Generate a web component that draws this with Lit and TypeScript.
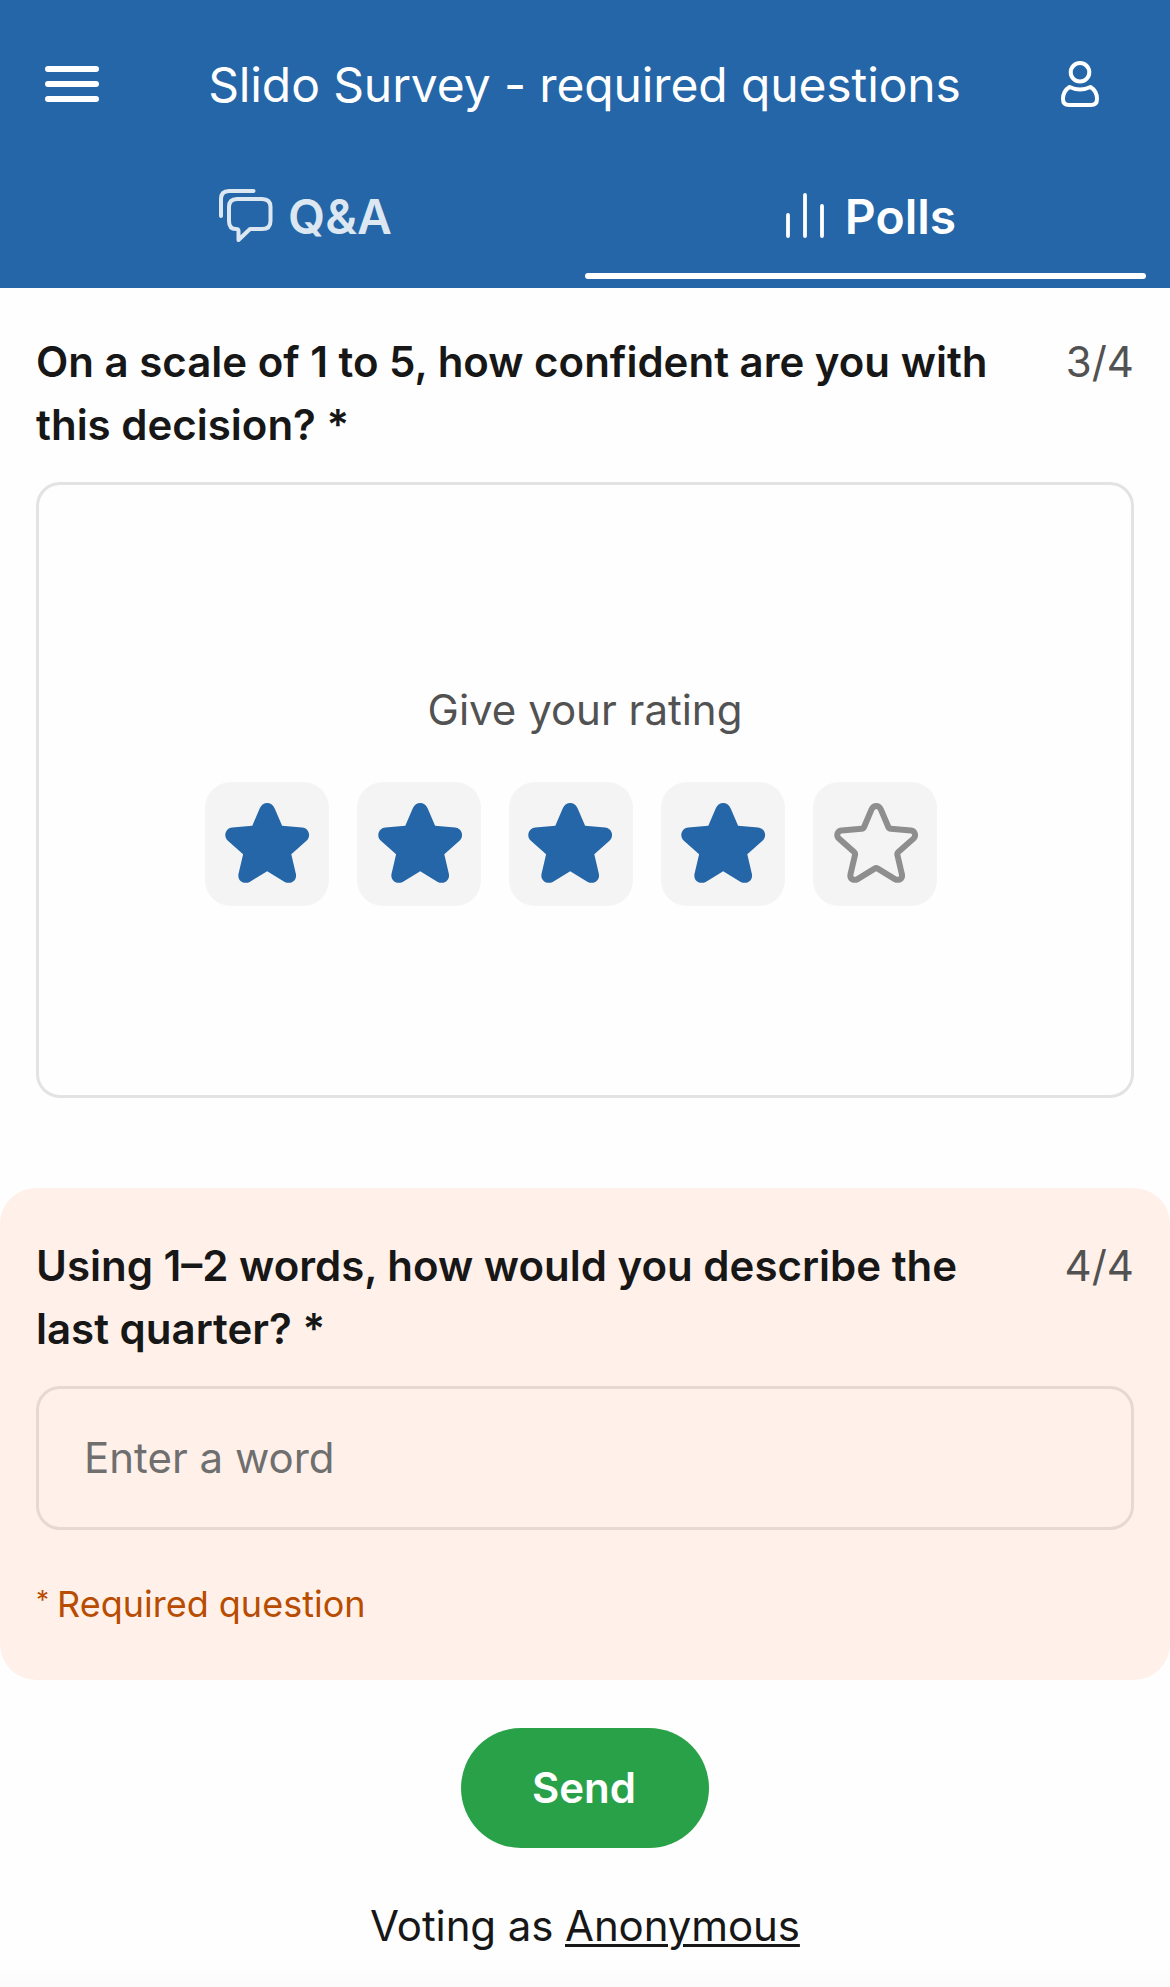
import { LitElement, css, html, svg, nothing } from "lit";
import { customElement, property } from "lit/decorators.js";

const STAR =
  "M34.3 5.2C37.3 -1.7 46.1 -1.7 49.1 5.2L56.6 22.8L76.6 24.4C83.4 25 86 33.2 81 37.8L65.8 51.2L70.4 71C71.7 77.7 65 81.8 59.2 78.9L41.7 68.2L24.2 78.9C18.4 81.8 11.7 77.7 13 71L17.6 51.2L2.4 37.8C-2.6 33.2 0 25 6.8 24.4L26.8 22.8Z";

@customElement("poll-star")
export class PollStar extends LitElement {
  static styles = css`
  :host {
    box-sizing: border-box;
    display: grid;
    justify-content: center;
    width: 124px;
    height: 124px;
    padding-top: 21px;
    border-radius: 26px;
    background: #f4f4f4;
  }

  svg {
    display: block;
    overflow: visible;
  }
  `;

  @property({ type: Boolean })
  filled = false;

  @property({ type: Number })
  shift = 0;

  render() {
    return html`
      <svg width="84" height="80" viewBox="${-this.shift} 0 84 80">
        ${this.filled
          ? svg`<path d=${STAR} fill="#2466a7" />`
          : svg`
            <clipPath id="inside"><path d=${STAR} /></clipPath>
            <path d=${STAR} fill="none" stroke="#8e8e8e" stroke-width="12" stroke-linejoin="round" clip-path="url(#inside)" />
          `}
      </svg>
    `;
  }
}

@customElement("poll-question")
export class PollQuestion extends LitElement {
  static styles = css`
  :host {
    display: block;
    padding: 42px 36px 0;
  }

  :host([missing]) {
    padding-top: 46px;
    background: #fff1ea;
    border-radius: 36px;
  }

  .head {
    display: flex;
    justify-content: space-between;
    line-height: 63px;
    margin-bottom: 26px;
  }

  .title {
    font-weight: 600;
    width: 960px;
    color: #171717;
  }

  .count {
    color: #525252;
  }

  .note {
    display: flex;
    gap: 8px;
    padding: 47px 0 49px;
    font-size: 36px;
    line-height: 54px;
    color: #b84c00;
  }

  .mark {
    font-size: 26px;
    line-height: 46px;
  }
  `;

  @property({ type: String })
  label = "";

  @property({ type: String })
  count = "";

  @property({ type: Boolean, reflect: true })
  missing = false;

  render() {
    return html`
      <div class="head">
        <div class="title">${`${this.label} *`}</div>
        <div class="count">${this.count}</div>
      </div>
      <slot></slot>
      ${this.missing
        ? html`<div class="note"><span class="mark">*</span><span>Required question</span></div>`
        : nothing}
    `;
  }
}

@customElement("app-root")
export class AppRoot extends LitElement {
  static styles = css`
  :host {
    display: block;
    height: 1987px;
    overflow: hidden;
    background: linear-gradient(#fefefe calc(100% - 24px), #fbfbfb);
    color: #171717;
    font-family: Inter, "Liberation Sans", sans-serif;
    font-size: 42px;
  }

  * {
    box-sizing: border-box;
  }

  svg {
    display: block;
    flex: none;
  }

  header {
    height: 288px;
    background: #2466a7;
    color: #fff;
    font-size: 48px;
  }

  .bar {
    display: flex;
    align-items: center;
    justify-content: space-between;
    height: 168px;
    padding: 0 71px 0 45px;
  }

  .heading {
    padding-left: 9px;
    letter-spacing: -0.12px;
  }

  .tabs {
    display: grid;
    grid-template-columns: 1fr 1fr;
    height: 111px;
    padding: 0 24px;
    font-weight: 600;
  }

  .tab {
    display: flex;
    justify-content: center;
    gap: 15px;
    padding-left: 2px;
    line-height: 98px;
  }

  .tab svg {
    margin-top: 21px;
  }

  .qa {
    color: #dde7f2;
  }

  .active {
    position: relative;
    gap: 20px;
    padding-left: 11px;
  }

  .active svg {
    margin-top: 20px;
  }

  .active::after {
    content: "";
    position: absolute;
    left: 0;
    right: 0;
    bottom: 0;
    height: 6px;
    border-radius: 3px;
    background: #fff;
  }

  .rating {
    height: 616px;
    border: 3px solid #e3e3e3;
    border-radius: 24px;
    padding-top: 199px;
    line-height: 51px;
    text-align: center;
    color: #525252;
  }

  .stars {
    display: flex;
    gap: 28px;
    margin: 47px 0 0 166px;
  }

  .second {
    margin-top: 90px;
  }

  .input {
    height: 144px;
    border: 3px solid #e6d9d2;
    border-radius: 24px;
    padding: 0 45px;
    line-height: 138px;
    color: #6f6f6f;
  }

  footer {
    display: flex;
    flex-direction: column;
    align-items: center;
    padding-top: 48px;
  }

  .send {
    width: 248px;
    height: 120px;
    border: 0;
    border-radius: 60px;
    padding: 0 2px 2px 0;
    background: #29a148;
    color: #fff;
    font: inherit;
    font-weight: 600;
  }

  .voting {
    margin-top: 46px;
    line-height: 63px;
    letter-spacing: -0.1px;
  }

  .name {
    text-decoration: underline;
    text-decoration-thickness: 3px;
    text-underline-offset: 3px;
  }
  `;

  // horizontal nudge of each star inside its tile
  private stars = [
    { filled: true, shift: 0.5 },
    { filled: true, shift: 1.5 },
    { filled: true, shift: -0.5 },
    { filled: true, shift: 0.5 },
    { filled: false, shift: 1.5 },
  ];

  render() {
    return html`
      <header>
        <div class="bar">
          <svg width="54" height="36" viewBox="0 0 54 36" stroke="#fff" stroke-width="6" stroke-linecap="round">
            <path d="M3 3h48M3 18h48M3 33h48" />
          </svg>
          <div class="heading">Slido Survey - required questions</div>
          <svg width="38" height="46" viewBox="0 0 38 46" fill="none" stroke="#fff" stroke-width="4" stroke-linejoin="round">
            <circle cx="19" cy="11.3" r="9.3" />
            <path d="M8.5 26Q19 31 29.5 26Q36 30 36 38Q36 44 30 44H8Q2 44 2 38Q2 30 8.5 26Z" />
          </svg>
        </div>
        <div class="tabs">
          <div class="tab qa">
            <svg width="54" height="54" viewBox="0 0 54 54" fill="none" stroke="currentColor" stroke-width="4" stroke-linecap="round" stroke-linejoin="round">
              <path d="M2 27V10Q2 2 10 2H34.5" />
              <path d="M18 10H43Q51.5 10 51.5 18V32Q51.5 40 43 40H31L19.5 51V42Q19.5 40 17 40Q10 40 10 32V18Q10 10 18 10Z" />
            </svg>
            <span>Q&amp;A</span>
          </div>
          <div class="tab active">
            <svg width="39" height="54" viewBox="0 0 39 54" stroke="currentColor" stroke-width="3.8" stroke-linecap="round">
              <path d="M2 27V48M19 7V48M36 18V48" />
            </svg>
            <span>Polls</span>
          </div>
        </div>
      </header>
      <main>
        <poll-question label="On a scale of 1 to 5, how confident are you with this decision?" count="3/4">
          <div class="rating">
            <div>Give your rating</div>
            <div class="stars">
              ${this.stars.map(
                (s) => html`<poll-star ?filled=${s.filled} .shift=${s.shift}></poll-star>`
              )}
            </div>
          </div>
        </poll-question>
        <poll-question class="second" missing label="Using 1–2 words, how would you describe the last quarter?" count="4/4">
          <div class="input">Enter a word</div>
        </poll-question>
      </main>
      <footer>
        <button class="send">Send</button>
        <div class="voting">Voting as <span class="name">Anonymous</span></div>
      </footer>
    `;
  }
}
